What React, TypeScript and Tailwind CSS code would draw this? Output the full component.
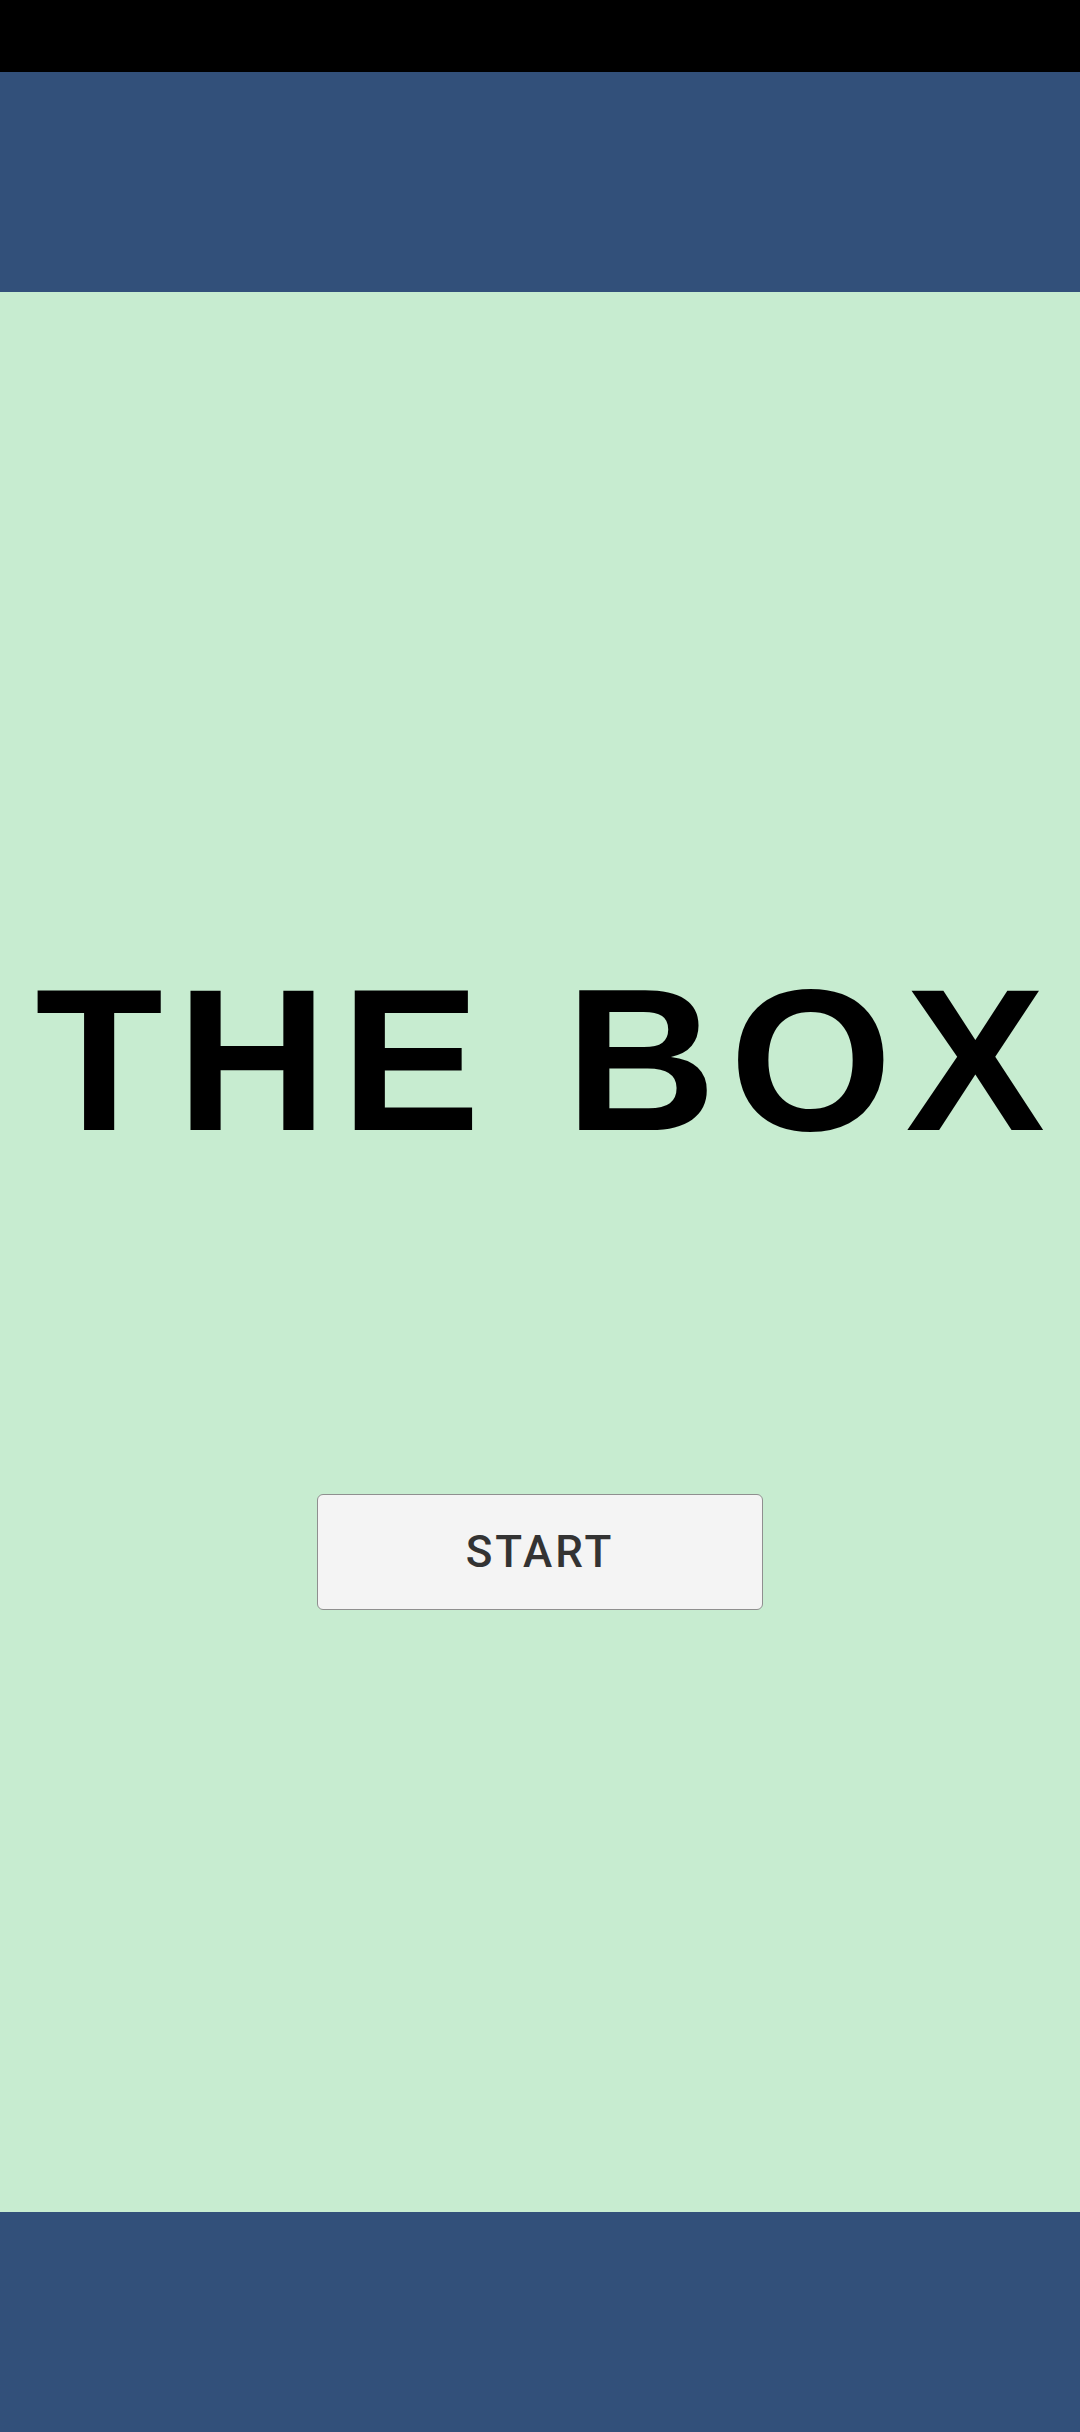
export default function App() {
  return (
    <div className="flex h-[2432px] w-[1080px] flex-col overflow-hidden" style={{ fontFamily: '"Liberation Sans", Arial, sans-serif' }}>
      <div className="h-[72px] bg-black" />
      <div className="h-[220px] bg-[#32507a]" />
      <main className="flex flex-1 flex-col items-center bg-[#c7ecd0] pt-[666px]">
        <h1 className="origin-center scale-x-[1.03] text-[203px] font-bold leading-none tracking-[13px] text-black whitespace-nowrap pl-[13px]">
          THE BOX
        </h1>
        <button
          className="mt-[333px] flex h-[116px] w-[446px] items-center justify-center rounded-[6px] border border-[#8f8f8f] bg-[#f4f4f4] text-[44px] font-medium leading-none tracking-[3px] text-[#333333]"
          style={{ fontFamily: 'Roboto, "Liberation Sans", sans-serif' }}
        >
          START
        </button>
      </main>
      <div className="h-[220px] bg-[#32507a]" />
    </div>
  );
}
